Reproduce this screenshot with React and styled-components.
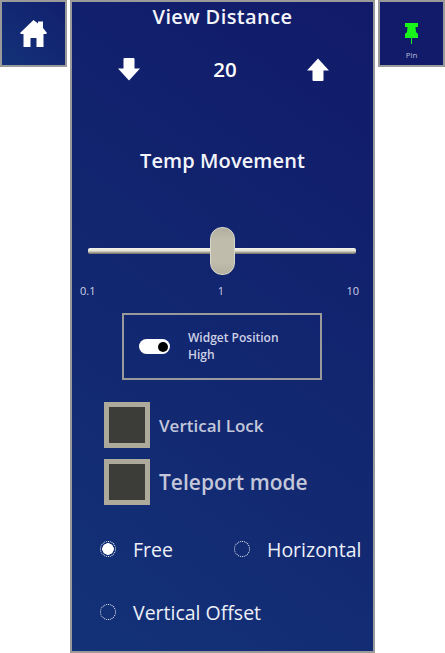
import React from "react";
import styled, { createGlobalStyle } from "styled-components";

const Global = createGlobalStyle`
  html, body { margin: 0; padding: 0; background: #fff; overflow: hidden; }
  body { font-family: "Open Sans", "Noto Sans", "Liberation Sans", sans-serif; }
`;
const Page = styled.div`
  width: 445px; height: 653px; display: flex; justify-content: space-between; align-items: flex-start;
`;
const Tile = styled.div`
  box-sizing: border-box; width: 67px; height: 67px; border: 2px solid #9a9a9a;
  background: ${p => p.$dark ? "#111b69" : "linear-gradient(45deg,#133278,#121f6e)"};
  display: flex; flex-direction: column; align-items: center; justify-content: flex-start;
  padding-top: ${p => p.$pad}px;
`;
const PinLabel = styled.span`
  color: #b9bcd8; font-size: 8px; font-weight: 500; line-height: 10px; margin-top: 6px;
`;
const Panel = styled.main`
  box-sizing: border-box; width: 305px; height: 653px; margin-left: 3px; margin-right: 3px;
  border: 2px solid #9a9a9a;
  background: linear-gradient(35deg,#133278 0%,#122670 50%,#111a69 100%);
  display: flex; flex-direction: column; align-items: stretch; color: #fff;
`;
const Heading = styled.h2`
  margin: ${p => p.$top}px 0 0; height: 26px; line-height: 26px; font-size: 20px; font-weight: 600;
  letter-spacing: ${p => p.$track}px; text-align: center; color: #f4f5fb;
`;
const DistanceRow = styled.div`
  margin-top: 25px; height: 28px; display: flex; align-items: center; justify-content: space-between;
  padding: 0 44px 0 46px;
`;
const Value = styled.span`
  font-size: 20.5px; font-weight: 600; line-height: 28px; margin-left: 3px;
`;
const SliderArea = styled.div`
  margin: 53px 17px 0 16px; height: 48px; display: flex; align-items: center; position: relative;
`;
const Track = styled.div`
  width: 100%; height: 6px; border-radius: 2px;
  background: linear-gradient(#f4f3ea 0%, #e6e4d8 45%, #6d6b60 100%);
`;
const Thumb = styled.div`
  position: absolute; left: 122px; top: 0; width: 25px; height: 48px; border-radius: 12px;
  background: linear-gradient(#b1aea0,#bfbcab 25%,#bfbcab 75%,#b3b0a0);
  border: 1px solid #d8d6cb; box-sizing: border-box;
`;
const Ticks = styled.div`
  margin: 8px 14px 0 8px; height: 16px; display: flex; justify-content: space-between;
  font-size: 11px; line-height: 16px; color: #cfd2e6;
`;
const ToggleBox = styled.div`
  box-sizing: border-box; align-self: flex-start; margin: 14px 0 0 50px; width: 200px; height: 67px;
  border: 2px solid #9a9a9a; display: flex; align-items: center; padding-left: 15px;
`;
const Switch = styled.div`
  width: 31px; height: 15px; border-radius: 8px; background: #fff; display: flex; align-items: center;
  justify-content: flex-end; padding-right: 2px; box-sizing: border-box; flex: none;
`;
const Knob = styled.div`
  width: 10px; height: 10px; border-radius: 50%; background: #000;
`;
const ToggleText = styled.div`
  margin-left: 18px; font-size: 12px; font-weight: 600; line-height: 17px; color: #ced1e6; margin-top: -1px;
`;
const CheckRow = styled.div`
  margin: ${p => p.$top}px 0 0 32px; display: flex; align-items: center; gap: 9px;
`;
const CheckBox = styled.div`
  box-sizing: border-box; width: 46px; height: 46px; background: #3c3c38; border: 5px solid #aeaa9b; flex: none;
`;
const CheckLabel = styled.span`
  font-size: ${p => p.$size}px; font-weight: 600; color: #c4c7d9;
`;
const RadioGrid = styled.div`
  margin: 25px 0 0 28px; display: grid; grid-template-columns: 134px auto; row-gap: 25px; justify-content: start;
`;
const RadioItem = styled.div`
  display: flex; align-items: center; gap: 18px; height: 38px; white-space: nowrap;
  grid-column: ${p => p.$full ? "1 / 3" : "auto"};
`;
const RadioDot = styled.div`
  box-sizing: border-box; width: 16px; height: 16px; border-radius: 50%; border: 1px dotted #fff; flex: none;
  background: ${p => p.$on ? "radial-gradient(circle,#fff 0 5.5px,transparent 6px)" : "transparent"};
`;
const RadioLabel = styled.span`
  font-size: 19.5px; font-weight: 500; color: #eef0f8; margin-left: -1px;
`;

const HomeIcon = () => (
  <svg width="27" height="27" viewBox="0 0 27 27" fill="#fff" aria-hidden="true">
    <path d="M13.5 0 L18 3.5 V1.5 H23 V8 L27 13 L26 14 H23.5 V27 H16.5 V18 H10.5 V27 H3.5 V14 H1 L0 13 Z" />
  </svg>
);
const DownArrow = () => (
  <svg width="22" height="23" viewBox="0 0 22 23" fill="#fff" aria-hidden="true">
    <path d="M5.5 1 Q5.5 0 6.5 0 H15.5 Q16.5 0 16.5 1 V10.5 H22 L11 22.5 L0 10.5 H5.5 Z" />
  </svg>
);
const UpArrow = () => (
  <svg width="22" height="23" viewBox="0 0 22 23" fill="#fff" aria-hidden="true">
    <path d="M5.5 22 Q5.5 23 6.5 23 H15.5 Q16.5 23 16.5 22 V12.5 H22 L11 0.5 L0 12.5 H5.5 Z" />
  </svg>
);
const PinIcon = () => (
  <svg width="13" height="21" viewBox="0 0 13 21" fill="#19f51b" aria-hidden="true">
    <path d="M0 0 H13 V4 H10.5 L11 9 L13 11 V15 H7 V21 H6 V15 H0 V11 L2 9 L2.5 4 H0 Z" />
  </svg>
);

export default function App() {
  return (
    <Page>
      <Global />
      <Tile $pad={18}><HomeIcon /></Tile>
      <Panel>
        <Heading $top={2} $track={0.4}>View Distance</Heading>
        <DistanceRow>
          <DownArrow />
          <Value>20</Value>
          <UpArrow />
        </DistanceRow>
        <Heading $top={65} $track={0.1}>Temp Movement</Heading>
        <SliderArea>
          <Track />
          <Thumb />
        </SliderArea>
        <Ticks><span>0.1</span><span>1</span><span>10</span></Ticks>
        <ToggleBox>
          <Switch><Knob /></Switch>
          <ToggleText>Widget Position<br />High</ToggleText>
        </ToggleBox>
        <CheckRow $top={22}>
          <CheckBox />
          <CheckLabel $size={17}>Vertical Lock</CheckLabel>
        </CheckRow>
        <CheckRow $top={11}>
          <CheckBox />
          <CheckLabel $size={21}>Teleport mode</CheckLabel>
        </CheckRow>
        <RadioGrid>
          <RadioItem><RadioDot $on /><RadioLabel>Free</RadioLabel></RadioItem>
          <RadioItem><RadioDot /><RadioLabel>Horizontal</RadioLabel></RadioItem>
          <RadioItem $full><RadioDot /><RadioLabel>Vertical Offset</RadioLabel></RadioItem>
        </RadioGrid>
      </Panel>
      <Tile $dark $pad={21}>
        <PinIcon />
        <PinLabel>Pin</PinLabel>
      </Tile>
    </Page>
  );
}
